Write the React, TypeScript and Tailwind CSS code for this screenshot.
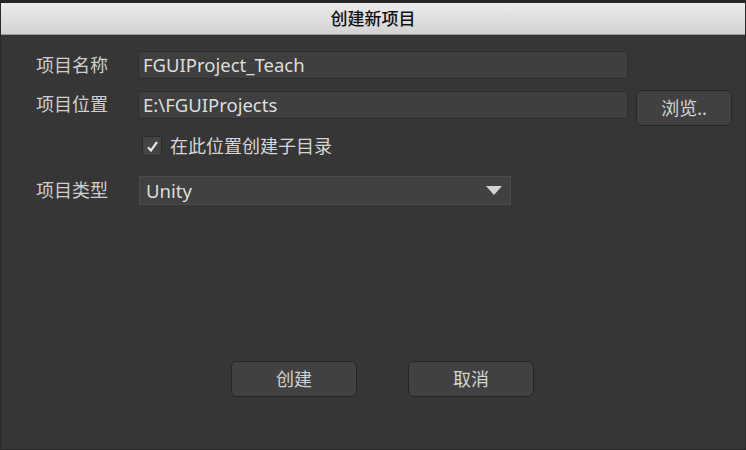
import { useState } from "react"

const font = { fontFamily: '"Noto Sans", "Noto Sans CJK SC", sans-serif' }

function TextField({ value, width }: { value: string; width: string }) {
  return (
    <div className={`${width} flex h-[28px] items-center border border-[#2e2e2e] bg-[#3f3f3f] pl-[4px] text-[18.5px] text-[#dedede]`}>
      {value}
    </div>
  )
}

function DialogButton({ label }: { label: string }) {
  return (
    <button className="flex h-[36px] w-[126px] items-center justify-center rounded-[6px] border border-[#252525] bg-[#414141] text-[18px] text-[#d2d2d2]">
      {label}
    </button>
  )
}

export default function App() {
  const [checked, setChecked] = useState(true)

  return (
    <div
      style={font}
      className="flex h-[450px] w-[746px] flex-col overflow-hidden border-x border-b border-[#2a2a2a] bg-[#363636] border-t-[3px] border-t-[#262626]"
    >
      <div className="flex h-[32px] items-center justify-center border-b border-[#9a9a9a] bg-gradient-to-b from-[#ececec] to-[#d2d2d2] text-[17px] font-medium text-[#111]">
        创建新项目
      </div>

      <div className="flex flex-col pl-[35px]">
        <div className="mt-[16px] flex h-[28px] items-center">
          <span className="w-[102px] text-[18px] text-[#cfcfcf]">项目名称</span>
          <TextField value="FGUIProject_Teach" width="w-[490px]" />
        </div>

        <div className="mt-[11px] flex items-start">
          <span className="mt-[-1px] flex h-[30px] w-[102px] items-center text-[18px] text-[#cfcfcf]">项目位置</span>
          <div className="mt-[1px]">
            <TextField value="E:\FGUIProjects" width="w-[490px]" />
          </div>
          <button className="ml-[8px] flex h-[36px] w-[96px] items-center justify-center rounded-[6px] border border-[#252525] bg-[#414141] text-[18px] text-[#d2d2d2]">
            浏览..
          </button>
        </div>

        <label className="ml-[106px] mt-[10px] flex h-[20px] cursor-pointer items-center gap-[8px] text-[18px] leading-[20px] text-[#d6d6d6]">
          <span
            onClick={() => setChecked(!checked)}
            className="flex h-[20px] w-[20px] items-center justify-center border border-[#2a2a2a] bg-[#444]"
          >
            {checked && (
              <svg width="13" height="13" viewBox="0 0 13 13">
                <path d="M2 7.2 L5 10.5 L11 2" fill="none" stroke="#e2e2e2" strokeWidth="2.2" />
              </svg>
            )}
          </span>
          在此位置创建子目录
        </label>

        <div className="mt-[20px] flex h-[29px] items-center">
          <span className="w-[103px] text-[18px] text-[#cfcfcf]">项目类型</span>
          <div className="flex h-[29px] w-[372px] items-center justify-between border border-[#4c4c4c] bg-[#414141] pl-[6px] pr-[8px] text-[18.5px] text-[#dedede]">
            Unity
            <svg width="16" height="10" viewBox="0 0 16 10">
              <path d="M0 0 H16 L8 9 Z" fill="#d4d4d4" />
            </svg>
          </div>
        </div>
      </div>

      <div className="ml-[230px] mt-[156px] flex gap-[51px]">
        <DialogButton label="创建" />
        <DialogButton label="取消" />
      </div>
    </div>
  )
}
